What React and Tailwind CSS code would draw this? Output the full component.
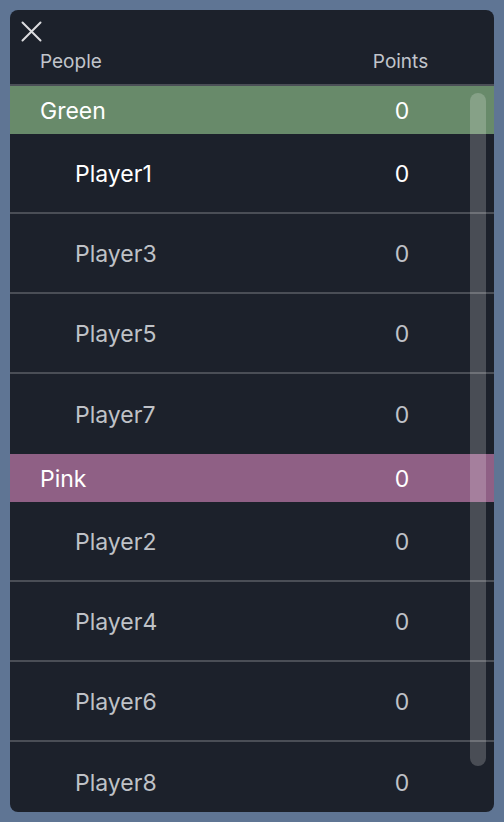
import React from "react";

const teams = [
  { name: "Green", color: "bg-[#688a6a]", players: ["Player1", "Player3", "Player5", "Player7"] },
  { name: "Pink", color: "bg-[#8f6085]", players: ["Player2", "Player4", "Player6", "Player8"] },
];

export default function App() {
  return (
    <div
      className="w-[504px] h-[822px] bg-[#5f7594] p-[10px]"
      style={{ fontFamily: "Inter, 'Open Sans', sans-serif" }}
    >
      <div className="relative w-full h-full bg-[#1c212b] rounded-[8px] overflow-hidden flex flex-col">
        <div className="h-[74px] flex flex-col shrink-0">
          <div className="h-[36px] pl-[11px] pt-[11px]">
            <svg width="21" height="21" viewBox="0 0 21 21" className="block">
              <path d="M1.5 1.5 L19.5 19.5 M19.5 1.5 L1.5 19.5" stroke="#dcdde0" strokeWidth="2" strokeLinecap="round" />
            </svg>
          </div>
          <div className="flex items-center pl-[30px] pr-[40px] h-[32px] text-[19px] text-[#c1c5cb]">
            <div className="flex-1">People</div>
            <div className="w-[100px] text-center pr-[7px]">Points</div>
          </div>
        </div>
        <div className="h-[2px] bg-[#4b4f57] shrink-0" />
        <div className="flex-1 overflow-hidden">
          {teams.map((t) => (
            <div key={t.name}>
              <div className={`h-[48px] flex items-center pl-[30px] pr-[42px] pt-[2px] text-[23px] text-white ${t.color}`}>
                <div className="flex-1">{t.name}</div>
                <div className="w-[100px] text-center">0</div>
              </div>
              {t.players.map((p, i) => (
                <div
                  key={p}
                  className={`h-[80px] flex items-center pl-[65px] pr-[42px] pt-[2px] text-[23px] ${
                    i < t.players.length - 1 ? "border-b-2 border-[#4a4e56]" : ""
                  } ${p === "Player1" ? "text-white" : "text-[#bfc2c7]"}`}
                >
                  <div className="flex-1">{p}</div>
                  <div className="w-[100px] text-center">0</div>
                </div>
              ))}
            </div>
          ))}
        </div>
        <div className="absolute left-[460px] top-[83px] w-[16px] h-[673px] rounded-full bg-[rgba(255,255,255,0.2)]" />
      </div>
    </div>
  );
}
